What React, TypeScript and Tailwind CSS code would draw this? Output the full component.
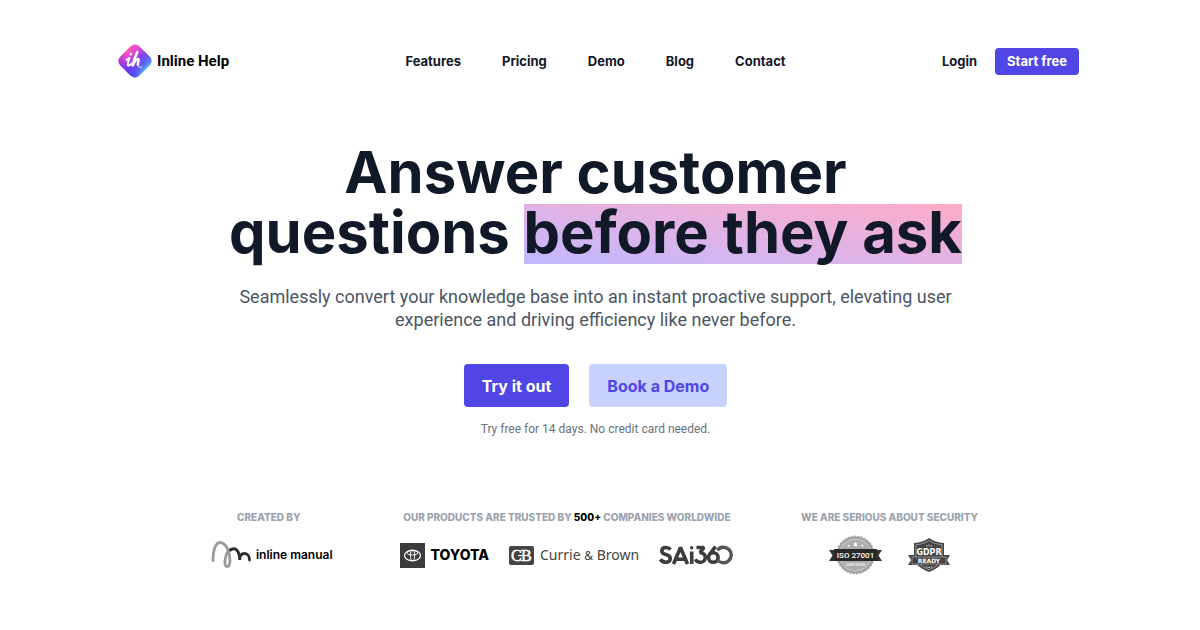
const navLinks = ["Features", "Pricing", "Demo", "Blog", "Contact"];

function BrandMark() {
  return (
    <svg className="h-9 w-9" viewBox="0 0 36 36" fill="none" aria-hidden="true">
      <defs>
        <linearGradient id="brand" x1="0" y1="14" x2="36" y2="14" gradientUnits="userSpaceOnUse">
          <stop offset="0.05" stopColor="#ff5aa5" />
          <stop offset="0.28" stopColor="#ee4bd0" />
          <stop offset="0.55" stopColor="#7c45f2" />
          <stop offset="0.75" stopColor="#5b6cf6" />
          <stop offset="0.95" stopColor="#55d5f7" />
        </linearGradient>
        <linearGradient id="brandShade" x1="18" y1="12" x2="18" y2="34" gradientUnits="userSpaceOnUse">
          <stop offset="0.3" stopColor="#4a2cf5" stopOpacity="0" />
          <stop offset="1" stopColor="#4a2cf5" stopOpacity="0.7" />
        </linearGradient>
      </defs>
      <rect x="4.5" y="4.5" width="27" height="27" rx="6" transform="rotate(45 18 18)" fill="url(#brand)" />
      <rect x="4.5" y="4.5" width="27" height="27" rx="6" transform="rotate(45 18 18)" fill="url(#brandShade)" />
      <g stroke="#fff" strokeLinecap="round" strokeLinejoin="round">
        <path d="M9.500 16.800c1.200-.3 2.200-1 3-1.800-.6 2.400-2 5.200-1.700 6.800.3 1.500 2.200.6 4-1.400" strokeWidth="2" />
        <path d="M13.700 11.300l.3-.5" strokeWidth="2.300" />
        <path d="M20.300 9c-1.900 4-3.700 8.600-4.500 13.600 1.300-3.400 3.400-6.600 5.200-6.600 1.600 0-.5 3.800-.1 5.800" strokeWidth="2.500" />
        <path d="M21 22c.3 1.800 1.700 3.400 3.600 2" strokeWidth="1" />
      </g>
    </svg>
  );
}

function InlineManualMark() {
  return (
    <svg className="h-[30px] w-[46px]" viewBox="0 0 46 30" fill="none" strokeLinecap="round" aria-hidden="true">
      <path
        d="M8 20.500C8 9 11 2.500 15 2.500C21 2.500 25 12 25 20C25 24.500 24 26.500 22 26.500C19.500 26.500 19.500 22 20.500 17.500C21.500 13 24 9.500 27 9"
        stroke="#9a9a9a"
        strokeWidth="2.800"
      />
      <path d="M25.500 10C31 6 34.700 12 34.700 20C34.700 16 36.500 13.500 39.500 13.500C43 13.500 44.500 17 44.500 20" stroke="#2b2b2b" strokeWidth="2.800" />
    </svg>
  );
}

function ToyotaMark() {
  return (
    <svg className="h-[25px] w-[25px]" viewBox="0 0 25 25" fill="none" aria-hidden="true">
      <rect width="25" height="25" fill="#3c3c3c" />
      <g stroke="#fff">
        <ellipse cx="12.500" cy="12.500" rx="8" ry="5.400" strokeWidth="1.200" />
        <ellipse cx="12.500" cy="9.800" rx="5.400" ry="2.200" strokeWidth="1" />
        <ellipse cx="12.500" cy="12.500" rx="2.100" ry="5.200" strokeWidth="1" />
      </g>
    </svg>
  );
}

function CurrieMark() {
  return (
    <svg className="h-[19px] w-[25px]" viewBox="0 0 25 19" aria-hidden="true">
      <rect width="25" height="19" rx="2" fill="#444" />
      <text x="2" y="15" fontFamily="Liberation Serif, serif" fontSize="16" fill="#fff" stroke="#fff" strokeWidth="0.500">
        C
      </text>
      <text x="12" y="15" fontFamily="Liberation Serif, serif" fontSize="16" fill="#fff" stroke="#fff" strokeWidth="0.500">
        B
      </text>
      <path d="M9 9.500h7" stroke="#fff" strokeWidth="1.200" />
    </svg>
  );
}

function SaiLogo() {
  return (
    <svg className="h-5 w-[75px]" viewBox="0 0 75 20" fill="none" role="img" aria-label="SAI360">
      <g stroke="#3d3d3d" strokeWidth="3.600">
        <path d="M11.500 4.600C10.300 3 8.800 2.500 7 2.500c-2.400 0-4.200 1.200-4.200 3.400C2.800 11 11.300 8 11.300 13.500c0 2.400-1.900 3.800-4.500 3.800-2.300 0-4.200-1-5.400-3" />
        <path d="M14.500 19L21.500 2.500L28.500 19M17 14.200h9" strokeLinejoin="bevel" />
        <path d="M32.700 6.500V19" />
        <path d="M37.500 2.500H45l-4 5.200c3.400 0 5.300 2 5.300 4.700 0 3-2.200 4.900-5 4.900-2.300 0-4-1-5-3" strokeLinejoin="bevel" />
        <path d="M56.500 1.500L50.800 9.300" />
        <circle cx="54.300" cy="12.500" r="4.800" />
      </g>
      <circle cx="32.700" cy="2.700" r="1.700" fill="#3d3d3d" />
      <path d="M58.300 14.800A7.800 7.800 0 1 0 58.300 5.200" stroke="#555" strokeWidth="3.400" />
    </svg>
  );
}

function IsoBadge() {
  return (
    <svg className="h-10 w-[53px]" viewBox="0 0 53 40" role="img" aria-label="ISO 27001 certified">
      <circle cx="26.500" cy="20" r="18.600" fill="#a3a3a3" stroke="#a3a3a3" strokeWidth="1.600" strokeDasharray="2 1.300" />
      <circle cx="26.500" cy="20" r="16" fill="#adadad" stroke="#d4d4d4" strokeWidth="0.800" />
      <path d="M26.500 6.500l.8 1.900 2 .1-1.600 1.300.6 2-1.800-1.100-1.800 1.100.6-2-1.600-1.300 2-.1z" fill="#fff" />
      <circle cx="19.500" cy="10.800" r="1" fill="#fff" />
      <circle cx="33.500" cy="10.800" r="1" fill="#fff" />
      <path d="M0 15h10v11H0l3.500-5.500zM53 15H43v11h10l-3.500-5.500z" fill="#333" />
      <rect x="5" y="14" width="43" height="12" fill="#282828" />
      <text x="26.500" y="23" textAnchor="middle" fontFamily="Roboto, sans-serif" fontSize="8" fontWeight="500" fill="#fff">
        ISO 27001
      </text>
      <text x="26.500" y="31" textAnchor="middle" fontFamily="Roboto, sans-serif" fontSize="4" fontWeight="700" fill="#eee">
        CERTIFIED
      </text>
    </svg>
  );
}

function GdprBadge() {
  return (
    <svg className="h-[34px] w-[42px]" viewBox="0 0 42 34" role="img" aria-label="GDPR ready">
      <path d="M0 17h9v10H0l3-5zM42 17h-9v10h9l-3-5z" fill="#444" />
      <path d="M21 0c4 3 9 4.600 15 5v13c0 8-7 13-15 16C13 31 6 26 6 18V5c6-.4 11-2 15-5z" fill="#444" />
      <path d="M21 2.500c4 2.500 8 3.800 13 4.300V18c0 6.500-6 11-13 13.700C14 29 8 24.500 8 18V6.800C13 6.300 17 5 21 2.500z" fill="none" stroke="#bbb" strokeWidth="0.700" />
      <path d="M18 8h1.500M20.300 7.200h1.500M22.600 8h1.500M18 29h1.500M20.300 29.500h1.500M22.600 29h1.500" stroke="#ddd" />
      <rect x="4" y="19" width="34" height="7" fill="#444" stroke="#bbb" strokeWidth="0.600" />
      <text x="21" y="17" textAnchor="middle" fontFamily="DejaVu Sans, sans-serif" fontSize="8" fontWeight="700" fill="#fff">
        GDPR
      </text>
      <text x="21" y="25" textAnchor="middle" fontFamily="DejaVu Sans, sans-serif" fontSize="6" fontWeight="700" fill="#fff">
        READY
      </text>
    </svg>
  );
}

function Header() {
  return (
    <header className="mx-auto grid w-full max-w-[967px] grid-cols-[1fr_auto_1fr] items-center pt-[43px]">
      <a href="#home" className="ml-[5px] flex items-center gap-1 font-['Roboto',sans-serif] text-[15px] text-black">
        <BrandMark />
        Inline Help
      </a>
      <nav className="flex gap-[41px]">
        {navLinks.map((label) => (
          <a key={label} href={`#${label.toLowerCase()}`}>
            {label}
          </a>
        ))}
      </nav>
      <div className="flex items-center justify-end gap-[18px]">
        <a href="#login">Login</a>
        <button className="h-[27px] rounded bg-[#4f46e5] px-3 text-white">Start free</button>
      </div>
    </header>
  );
}

function Hero() {
  return (
    <section className="flex flex-col items-center pt-[63px] text-center">
      <h1 className="text-[58px] leading-[60px] font-bold">
        Answer customer
        <br />
        questions{" "}
        <span className="inline-block bg-linear-to-tr from-[#c0b8ff] to-[#ffabc8] pb-1 leading-[56px]">
          before they ask
        </span>
      </h1>
      <p className="mt-[21px] max-w-[720px] font-['Roboto',sans-serif] text-[18px] leading-[23px] font-normal text-[#4b5563]">
        Seamlessly convert your knowledge base into an instant proactive support, elevating user experience and driving
        efficiency like never before.
      </p>
      <div className="mt-[33px] flex gap-5 text-[16px]">
        <button className="h-[43px] rounded bg-[#4f46e5] px-[18px] text-white">Try it out</button>
        <button className="h-[43px] rounded bg-[#c7d2fe] px-[18px] text-[#4f46e5]">Book a Demo</button>
      </div>
      <p className="mt-3 font-['Roboto',sans-serif] text-[12px] leading-5 font-normal text-[#6b7280]">
        Try free for 14 days. No credit card needed.
      </p>
    </section>
  );
}

function Trust() {
  return (
    <section className="flex justify-center gap-[67px] pt-[70px] pr-2 text-[10px] leading-4 font-extrabold text-[#9ca3af]">
      <div className="flex flex-col items-center gap-[10px]">
        <h2>CREATED BY</h2>
        <div className="flex h-10 items-center gap-[5px] text-[12px] font-semibold text-black">
          <InlineManualMark />
          inline manual
        </div>
      </div>
      <div className="flex flex-col items-center gap-[10px]">
        <h2>
          OUR PRODUCTS ARE TRUSTED BY <span className="text-black">500+</span> COMPANIES WORLDWIDE
        </h2>
        <div className="flex h-10 items-center gap-5">
          <div className="flex items-center gap-[6px] text-[14px] font-extrabold text-black">
            <ToyotaMark />
            TOYOTA
          </div>
          <div className="flex items-center gap-[6px] font-['Noto_Sans',sans-serif] text-[14px] font-normal text-[#444]">
            <CurrieMark />
            <span>
              Currie <span className="text-[12px]">&amp;</span> Brown
            </span>
          </div>
          <SaiLogo />
        </div>
      </div>
      <div className="flex flex-col items-center gap-[10px]">
        <h2>WE ARE SERIOUS ABOUT SECURITY</h2>
        <div className="flex h-10 items-center gap-[26px]">
          <IsoBadge />
          <GdprBadge />
        </div>
      </div>
    </section>
  );
}

export default function App() {
  return (
    <div className="min-h-screen bg-white pr-[9px] font-['Inter',sans-serif] text-[13px] leading-5 font-bold text-[#111827]">
      <Header />
      <main>
        <Hero />
        <Trust />
      </main>
    </div>
  );
}
